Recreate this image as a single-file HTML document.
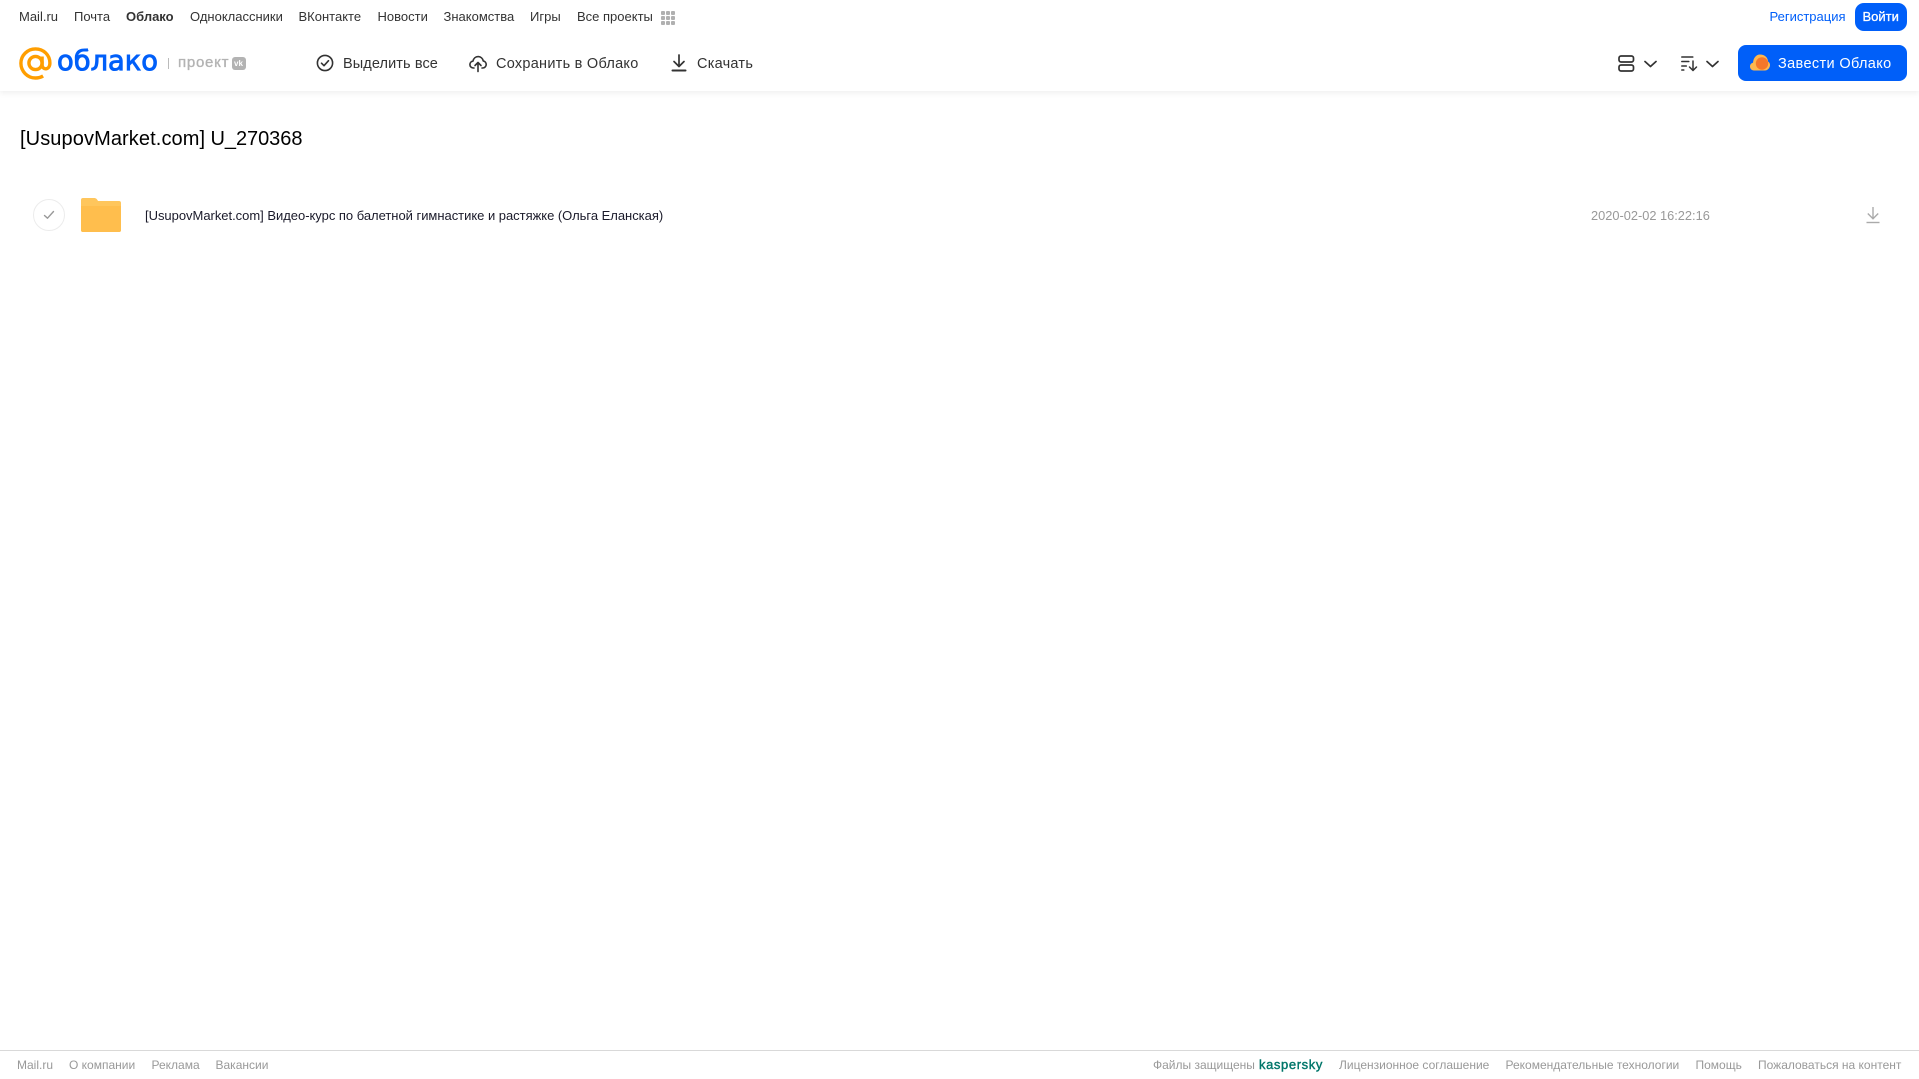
<!DOCTYPE html>
<html lang="ru"><head><meta charset="utf-8"><title>Облако</title>
<style>
html,body{margin:0;padding:0;background:#fff;width:1919px;height:1079px;overflow:hidden;font-family:"Liberation Sans",sans-serif}
.t{position:absolute;white-space:nowrap;line-height:16px}
.n{top:9px;font-size:13px;color:#333}
.a{top:56px;font-size:14.5px;color:#333;letter-spacing:.1px}
.f{top:1057px;font-size:12px;color:#999}
svg{position:absolute;overflow:visible}
</style></head><body>
<div style="position:absolute;left:0;top:0;width:1919px;height:91px;background:#fff;box-shadow:0 2px 6px rgba(0,0,0,.07)"></div>

<span class="t n" style="left:19px">Mail.ru</span>
<span class="t n" style="left:74px">Почта</span>
<span class="t n" style="left:126px;font-weight:bold">Облако</span>
<span class="t n" style="left:190px">Одноклассники</span>
<span class="t n" style="left:298.500px">ВКонтакте</span>
<span class="t n" style="left:377.500px">Новости</span>
<span class="t n" style="left:443.500px">Знакомства</span>
<span class="t n" style="left:530px">Игры</span>
<span class="t n" style="left:577px">Все проекты</span>
<svg style="left:661px;top:11px" width="14" height="14" fill="#b0b0b0"><rect x="0" y="0" width="4" height="4" rx="1"/><rect x="5" y="0" width="4" height="4" rx="1"/><rect x="10" y="0" width="4" height="4" rx="1"/><rect x="0" y="5" width="4" height="4" rx="1"/><rect x="5" y="5" width="4" height="4" rx="1"/><rect x="10" y="5" width="4" height="4" rx="1"/><rect x="0" y="10" width="4" height="4" rx="1"/><rect x="5" y="10" width="4" height="4" rx="1"/><rect x="10" y="10" width="4" height="4" rx="1"/></svg>

<span class="t n" style="left:1769.500px;color:#005ff9">Регистрация</span>
<div style="position:absolute;left:1855px;top:3px;width:52px;height:28px;background:#005ff9;border-radius:9px"></div>
<span class="t n" style="left:1862.500px;color:#fff;font-size:13px;-webkit-text-stroke:.3px #fff">Войти</span>

<svg style="left:19px;top:47px" width="33" height="33" viewBox="0 0 33 33" fill="none" stroke="#ff9e00" stroke-width="3.4"><circle cx="16.500" cy="16" r="6.600"/><path d="M23.100 9.500v8.300c0 5.600 7.800 5.600 7.800-1.800C30.900 7.900 24.500 1.900 16.500 1.900 8.500 1.900 1.900 8.300 1.900 16.300c0 8 6.500 14.700 14.600 14.700 3 0 5.400-.7 7.600-2"/></svg>
<svg style="left:57px;top:42px" width="104" height="36"><text x="0" y="28" font-family="'DejaVu Sans',sans-serif" font-size="27.500" fill="#005ff9" stroke="#005ff9" stroke-width=".9" textLength="101" lengthAdjust="spacingAndGlyphs">облако</text></svg>
<div style="position:absolute;left:168px;top:58px;width:1px;height:11px;background:#bbb"></div>
<span class="t" style="left:178px;top:55px;font-size:15px;color:#b3b3b3;letter-spacing:.75px;-webkit-text-stroke:.35px #b3b3b3">проект</span>
<div style="position:absolute;left:232px;top:57px;width:14px;height:13px;background:#b3b3b3;border-radius:3px"></div>
<span class="t" style="left:234px;top:57px;font-size:8px;line-height:13px;font-weight:bold;color:#fff">vk</span>

<svg style="left:316px;top:54px" width="18" height="18" fill="none" stroke="#333" stroke-width="1.600"><circle cx="9" cy="9" r="7.600"/><path d="M5.500 9.200l2.500 2.500 4.500-5" stroke-linecap="round" stroke-linejoin="round"/></svg>
<span class="t a" style="left:343px">Выделить все</span>
<svg style="left:469px;top:54px" width="18" height="18" fill="none" stroke="#333" stroke-width="1.600" stroke-linecap="round" stroke-linejoin="round"><path d="M5 14H4.500C2.500 14 .9 12.600.9 10.600c0-1.800 1.300-3.200 3-3.400C4.500 4.500 6.600 2.600 9.200 2.600c2.500 0 4.600 1.800 5 4.300 1.700.3 3 1.800 3 3.600 0 1.900-1.500 3.500-3.500 3.500H13"/><path d="M9 17.500V9M6 11.500L9 8.500l3 3"/></svg>
<span class="t a" style="left:496px;letter-spacing:.26px">Сохранить в Облако</span>
<svg style="left:671px;top:54px" width="16" height="18" fill="none" stroke="#333" stroke-width="1.700" stroke-linecap="round" stroke-linejoin="round"><path d="M8 1v11M3 7.500l5 5 5-5"/><path d="M1.500 16.500h13" stroke-width="2"/></svg>
<span class="t a" style="left:697px;letter-spacing:.25px">Скачать</span>

<svg style="left:1618px;top:55px" width="17" height="17" fill="none" stroke="#333" stroke-width="1.700"><rect x="1" y="1" width="14.500" height="6" rx="2"/><rect x="1" y="10" width="14.500" height="6" rx="2"/></svg>
<svg style="left:1644px;top:59.500px" width="13" height="8" fill="none" stroke="#333" stroke-width="1.700" stroke-linecap="round" stroke-linejoin="round"><path d="M1 1.500l5.500 5 5.500-5"/></svg>
<svg style="left:1681px;top:55px" width="17" height="17" fill="none" stroke="#333" stroke-width="1.500" stroke-linecap="round" stroke-linejoin="round"><path d="M.8 2h11M.8 6.500h7M.8 11h4.500M.8 15h2"/><path d="M12 6v9.500M8.500 12l3.500 3.500 3.500-3.500"/></svg>
<svg style="left:1706px;top:59.500px" width="13" height="8" fill="none" stroke="#333" stroke-width="1.700" stroke-linecap="round" stroke-linejoin="round"><path d="M1 1.500l5.500 5 5.500-5"/></svg>

<div style="position:absolute;left:1738px;top:45px;width:169px;height:36px;background:#005ff9;border-radius:8px"></div>
<svg style="left:1750px;top:54px" width="20" height="17"><path d="M4 16.500C1.500 16.500 0 14.500 0 12.500c0-2 1.300-3.500 3-3.800C3.500 4 6 .5 10 .5c4.500 0 8 3 8 7 1.300.7 2 2 2 3.500 0 3-2.500 5.500-5 5.500z" fill="#ffb74d"/><circle cx="12" cy="9.500" r="6.200" fill="#f5772a"/></svg>
<span class="t a" style="left:1778px;color:#fff;letter-spacing:.36px">Завести Облако</span>

<span class="t" style="left:20px;top:126.500px;font-size:20px;line-height:24px;color:#000;letter-spacing:.1px">[UsupovMarket.com]</span>
<span class="t" style="left:210.500px;top:126.500px;font-size:20px;line-height:24px;color:#000;letter-spacing:-.05px">U_270368</span>

<div style="position:absolute;left:33px;top:199px;width:30px;height:30px;border:1px solid #ececec;border-radius:50%"></div>
<svg style="left:43px;top:210px" width="12" height="10" fill="none" stroke="#999" stroke-width="1.400" stroke-linecap="round" stroke-linejoin="round"><path d="M1.500 5.500l3 2.700L10.500 1.500"/></svg>
<svg style="left:81px;top:198px" width="40" height="34"><path d="M2 0h11c2 0 3 1 4 3h21a2 2 0 0 1 2 2v27a2 2 0 0 1-2 2H2a2 2 0 0 1-2-2V2a2 2 0 0 1 2-2z" fill="#ffc65c"/><path d="M0 8h38a2 2 0 0 1 2 0v24a2 2 0 0 1-2 2H2a2 2 0 0 1-2-2z" fill="#ffbe4d"/></svg>
<span class="t" style="left:145px;top:208px;font-size:13px;letter-spacing:-.025px;color:#1a1a2a">[UsupovMarket.com] Видео-курс по балетной гимнастике и растяжке (Ольга Еланская)</span>
<span class="t" style="left:1591px;top:208px;font-size:12.800px;color:#999">2020-02-02 16:22:16</span>
<svg style="left:1866px;top:206px" width="14" height="18" fill="none" stroke="#aaa" stroke-width="1.400"><path d="M7 1v11.500M1.800 7.500L7 12.700l5.200-5.200"/><path d="M.5 16.500h13"/></svg>

<div style="position:absolute;left:0;top:1050px;width:1919px;height:1px;background:#d9d9d9"></div>
<span class="t f" style="left:17px">Mail.ru</span>
<span class="t f" style="left:69px">О компании</span>
<span class="t f" style="left:151.500px">Реклама</span>
<span class="t f" style="left:215.500px">Вакансии</span>
<span class="t f" style="left:1153px">Файлы защищены</span>
<span class="t f" style="left:1259px;font-size:13px;color:#00766a;-webkit-text-stroke:.4px #00766a;letter-spacing:.6px">kaspersky</span>
<span class="t f" style="left:1339px">Лицензионное соглашение</span>
<span class="t f" style="left:1505.500px">Рекомендательные технологии</span>
<span class="t f" style="left:1695.500px">Помощь</span>
<span class="t f" style="left:1758px">Пожаловаться на контент</span>
</body></html>
